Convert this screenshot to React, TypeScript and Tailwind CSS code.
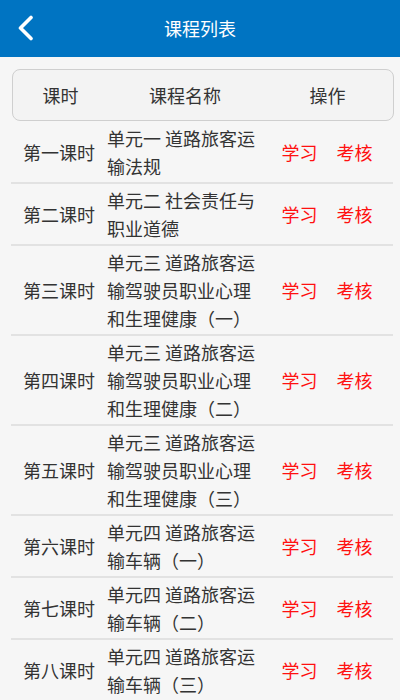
const lessons = [
  { no: "第一课时", name: "单元一 道路旅客运输法规" },
  { no: "第二课时", name: "单元二 社会责任与职业道德" },
  { no: "第三课时", name: "单元三 道路旅客运输驾驶员职业心理和生理健康（一）" },
  { no: "第四课时", name: "单元三 道路旅客运输驾驶员职业心理和生理健康（二）" },
  { no: "第五课时", name: "单元三 道路旅客运输驾驶员职业心理和生理健康（三）" },
  { no: "第六课时", name: "单元四 道路旅客运输车辆（一）" },
  { no: "第七课时", name: "单元四 道路旅客运输车辆（二）" },
  { no: "第八课时", name: "单元四 道路旅客运输车辆（三）" },
]

export default function App() {
  return (
    <div
      className="w-[400px] h-[700px] overflow-hidden bg-[#f6f6f6] text-[18px] text-[#333]"
      style={{ fontFamily: '"Noto Sans CJK SC", "Noto Sans", sans-serif' }}
    >
      {/* Top bar */}
      <div className="h-[57px] bg-[#0074c2] flex items-center relative">
        <button className="absolute left-[16px] top-[15px]">
          <svg width="18" height="26" viewBox="0 0 18 26" fill="none">
            <path d="M15 2.5 L4.5 13 L15 23.5" stroke="white" strokeWidth="3.6" strokeLinecap="round" strokeLinejoin="round" />
          </svg>
        </button>
        <div className="flex-1 text-center text-white text-[18px]">课程列表</div>
      </div>

      {/* Table head */}
      <div className="mx-[12px] mt-[12px] w-[382px] h-[52px] rounded-[8px] border border-[#cfcfcf] bg-[#f3f3f3] flex items-center">
        <div className="w-[95px] text-center">课时</div>
        <div className="w-[154px] text-center">课程名称</div>
        <div className="flex-1 text-center">操作</div>
      </div>

      {/* Rows */}
      <div className="ml-[11px] w-[382px] mt-[1px]">
        {lessons.map((l) => (
          <div
            key={l.no}
            className="flex items-center py-[2px] border-b-2 border-[#e2e2e2] leading-[28px]"
          >
            <div className="w-[96px] text-center">{l.no}</div>
            <div className="w-[154px]">{l.name}</div>
            <div className="flex-1 flex justify-center gap-[19px] text-[#ff1010]">
              <span>学习</span>
              <span>考核</span>
            </div>
          </div>
        ))}
      </div>
    </div>
  )
}
